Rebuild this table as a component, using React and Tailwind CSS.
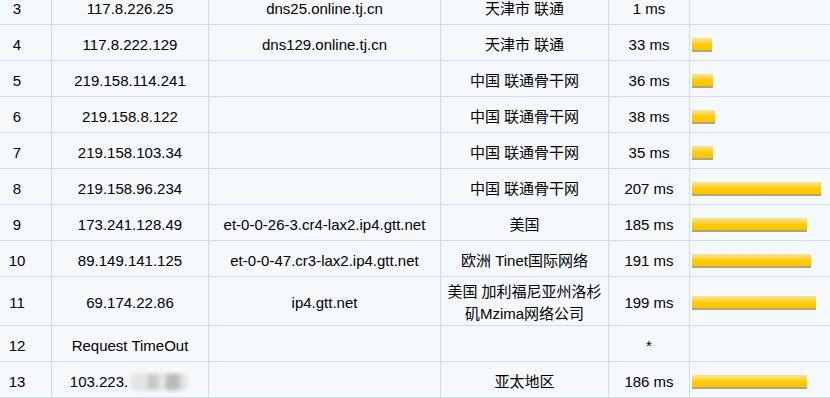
import React from "react";

const rows = [
  { n: "3", ip: "117.8.226.25", host: "dns25.online.tj.cn", loc: "天津市 联通", ms: "1 ms", w: 0 },
  { n: "4", ip: "117.8.222.129", host: "dns129.online.tj.cn", loc: "天津市 联通", ms: "33 ms", w: 20 },
  { n: "5", ip: "219.158.114.241", host: "", loc: "中国 联通骨干网", ms: "36 ms", w: 21 },
  { n: "6", ip: "219.158.8.122", host: "", loc: "中国 联通骨干网", ms: "38 ms", w: 23 },
  { n: "7", ip: "219.158.103.34", host: "", loc: "中国 联通骨干网", ms: "35 ms", w: 21 },
  { n: "8", ip: "219.158.96.234", host: "", loc: "中国 联通骨干网", ms: "207 ms", w: 129 },
  { n: "9", ip: "173.241.128.49", host: "et-0-0-26-3.cr4-lax2.ip4.gtt.net", loc: "美国", ms: "185 ms", w: 115 },
  { n: "10", ip: "89.149.141.125", host: "et-0-0-47.cr3-lax2.ip4.gtt.net", loc: "欧洲 Tinet国际网络", ms: "191 ms", w: 119 },
  { n: "11", ip: "69.174.22.86", host: "ip4.gtt.net", loc: ["美国 加利福尼亚州洛杉", "矶Mzima网络公司"], ms: "199 ms", w: 124, tall: true },
  { n: "12", ip: "Request TimeOut", host: "", loc: "", ms: "*", w: 0 },
  { n: "13", ip: "103.223.", blur: true, host: "", loc: "亚太地区", ms: "186 ms", w: 115 },
];

function Bar({ w }) {
  if (!w) return null;
  return (
    <div
      className="mt-[4px] h-[14px] border-b-2 border-[#a3a3a3] bg-gradient-to-b from-[#ffe77a] via-[#ffcc00] to-[#f7c600]"
      style={{ width: w }}
    />
  );
}

export default function App() {
  return (
    <div
      className="w-[830px] h-[398px] overflow-hidden bg-[#f5f9fc] text-[15px] leading-[22px] text-black"
      style={{ fontFamily: '"Liberation Sans", "Noto Sans CJK SC", sans-serif' }}
    >
      <div className="-mt-[11px]">
        {rows.map((r) => (
          <div
            key={r.n}
            className={`flex border-b border-[#d0dcee] ${r.tall ? "h-[49px]" : "h-[36px]"}`}
          >
            <div className="w-[52px] shrink-0 border-r border-[#d0dcee] pt-[4px] pr-[17px] flex items-center justify-center">
              {r.n}
            </div>
            <div className="w-[157px] shrink-0 border-r border-[#d0dcee] pt-[4px] flex items-center justify-center">
              {r.ip}
              {r.blur && (
                <span className="relative inline-block w-[62px] h-[22px] overflow-hidden">
                  <span className="absolute left-[2px] right-[2px] top-[2px] bottom-[2px] flex items-center rounded-[6px] bg-[#e4e4e4] blur-[2px]">
                    <span className="ml-[18px] w-[10px] h-[16px] bg-[#c8c8c8]" />
                    <span className="ml-[8px] w-[14px] h-[16px] bg-[#b9b9b9]" />
                  </span>
                </span>
              )}
            </div>
            <div className="w-[232px] shrink-0 border-r border-[#d0dcee] pt-[4px] flex items-center justify-center">
              {r.host}
            </div>
            <div className="w-[168px] shrink-0 border-r border-[#d0dcee] pt-[4px] flex items-center justify-center text-center">
              {Array.isArray(r.loc) ? (
                <div>
                  {r.loc[0]}
                  <br />
                  {r.loc[1]}
                </div>
              ) : (
                r.loc
              )}
            </div>
            <div className="w-[81px] shrink-0 border-r border-[#d0dcee] pt-[4px] flex items-center justify-center">
              {r.ms}
            </div>
            <div className="flex-1 pl-[2px] flex items-center">
              <Bar w={r.w} />
            </div>
          </div>
        ))}
      </div>
    </div>
  );
}
